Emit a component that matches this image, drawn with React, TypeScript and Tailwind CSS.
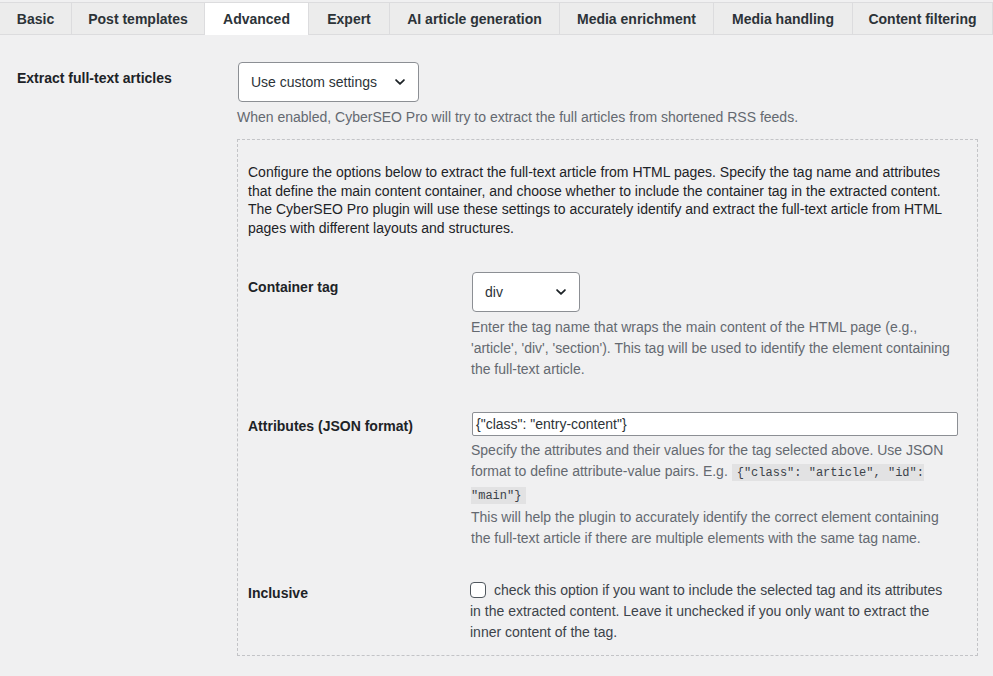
import React from 'react';

const tabs: Array<{ label: string; w: string; active?: boolean }> = [
  { label: 'Basic', w: 'w-[72px]' },
  { label: 'Post templates', w: 'w-[133px]' },
  { label: 'Advanced', w: 'w-[104px]', active: true },
  { label: 'Expert', w: 'w-[81px]' },
  { label: 'AI article generation', w: 'w-[170px]' },
  { label: 'Media enrichment', w: 'w-[154px]' },
  { label: 'Media handling', w: 'w-[139px]' },
  { label: 'Content filtering', w: 'flex-1' },
];

const Chevron = () => (
  <svg width="14" height="14" viewBox="0 0 16 16" fill="none" className="text-[#1d2327]">
    <path d="M3.5 5.75 8 10.25l4.5-4.5" stroke="currentColor" strokeWidth="2" strokeLinecap="round" strokeLinejoin="round" />
  </svg>
);

const Select = ({ value, width }: { value: string; width: string }) => (
  <div
    className={`${width} h-[40px] flex items-center justify-between pl-[12px] pr-[11px] bg-white border border-[#8c8f94] rounded-[4px] text-[14px] text-[#2c3338]`}
  >
    <span>{value}</span>
    <Chevron />
  </div>
);

const App: React.FC = () => {
  return (
    <div
      className="min-h-[676px] bg-[#f0f0f1] text-[14px] text-[#3c434a]"
      style={{ fontFamily: '"Liberation Sans", Arial, sans-serif' }}
    >
      {/* Tabs */}
      <div className="pt-[2px]">
        <div className="flex h-[33px] border-b border-[#dcdcde]">
          {tabs.map(t => (
            <div
              key={t.label}
              className={`${t.w} shrink-0 flex items-center justify-center pt-px border-t border-r border-[#dcdcde] text-[14px] font-bold text-[#2c3338] ${
                t.active ? 'bg-white -mb-px' : 'bg-[#ececec]'
              }`}
            >
              {t.label}
            </div>
          ))}
        </div>
      </div>

      {/* Main row */}
      <div className="flex pt-[27px] pl-[17px]">
        <div className="w-[221px] shrink-0 pt-[7px] text-[14px] font-bold leading-[18px] text-[#1d2327]">
          Extract full-text articles
        </div>
        <div className="flex-1 pr-[16px]">
          <Select value="Use custom settings" width="w-[181px]" />
          <p className="mt-[5px] leading-[21px] text-[#646970] -ml-px">
            When enabled, CyberSEO Pro will try to extract the full articles from shortened RSS feeds.
          </p>

          <div className="mt-[11px] -ml-px border border-dashed border-[#c3c4c7] pt-[23px] pb-[12px] pl-[10px] pr-[9px]">
            <p className="w-[720px] leading-[18.5px] text-[#1d2327]">
              Configure the options below to extract the full-text article from HTML pages. Specify the tag name and attributes
              <br />
              that define the main content container, and choose whether to include the container tag in the extracted content.
              <br />
              The CyberSEO Pro plugin will use these settings to accurately identify and extract the full-text article from HTML
              <br />
              pages with different layouts and structures.
            </p>

            {/* Container tag */}
            <div className="flex mt-[35px]">
              <div className="w-[223px] shrink-0 pt-[6px] font-bold leading-[18px] text-[#1d2327]">Container tag</div>
              <div className="w-[487px]">
                <div className="ml-px">
                  <Select value="div" width="w-[108px]" />
                </div>
                <p className="mt-[5px] leading-[21px] text-[#646970]">
                  Enter the tag name that wraps the main content of the HTML page (e.g., 'article', 'div', 'section'). This tag
                  will be used to identify the element containing the full-text article.
                </p>
              </div>
            </div>

            {/* Attributes */}
            <div className="flex mt-[32px]">
              <div className="w-[223px] shrink-0 pt-[5px] font-bold leading-[18px] text-[#1d2327]">Attributes (JSON format)</div>
              <div className="w-[487px]">
                <div className="ml-px h-[24px] w-[486px] flex items-center px-[3px] bg-white border border-[#8c8f94] rounded-[2px] text-[14px] text-[#2c3338]">
                  {'{"class": "entry-content"}'}
                </div>
                <p className="mt-[4px] leading-[21px] text-[#646970]">
                  Specify the attributes and their values for the tag selected above. Use JSON format to define attribute-value
                  pairs. E.g.{' '}
                  <code
                    className="bg-[#e2e2e3] text-[#3c434a] px-[5px] pt-[2px] pb-[1px] text-[12px]"
                    style={{ fontFamily: '"Liberation Mono", Consolas, monospace' }}
                  >
                    {'{"class": "article", "id":'}
                    <br />
                    {'"main"}'}
                  </code>
                  <br />
                  This will help the plugin to accurately identify the correct element containing the full-text article if
                  there are multiple elements with the same tag name.
                </p>
              </div>
            </div>

            {/* Inclusive */}
            <div className="flex mt-[31px]">
              <div className="w-[222px] shrink-0 pt-[4px] font-bold leading-[18px] text-[#1d2327]">Inclusive</div>
              <div className="w-[487px] leading-[21px] text-[#3c434a]">
                <span className="inline-block align-[-3px] w-[16px] h-[16px] mr-[8px] bg-white border border-[#50575e] rounded-[4px]" />
                check this option if you want to include the selected tag and its attributes in the extracted content. Leave
                it unchecked if you only want to extract the inner content of the tag.
              </div>
            </div>
          </div>
        </div>
      </div>
    </div>
  );
};

export default App;
